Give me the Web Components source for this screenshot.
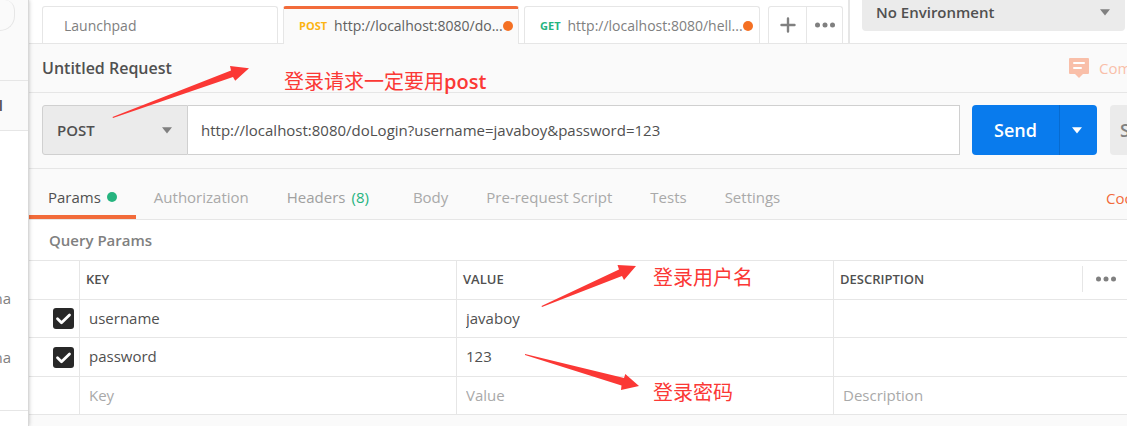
<!DOCTYPE html>
<html lang="en">
<head>
<meta charset="utf-8">
<title>Untitled Request</title>
<style>
  body {
    margin: 0;
    min-height: 100vh;
    background: #fafafa;
    color: #505050;
    font: 15px/20px "Open Sans", "Noto Sans CJK SC", sans-serif;
    overflow: hidden;
    --line: #e6e6e6;
    --muted: #a9a9a9;
    --grey: #808080;
    --accent: #f26b3a;
    --green: #26b47f;
  }
</style>
</head>
<body>
<api-client></api-client>
<script>
const define = (name, html, setup) => {
  const template = document.createElement('template');
  template.innerHTML = html;
  customElements.define(name, class extends HTMLElement {
    constructor() {
      super();
      this.attachShadow({ mode: 'open' }).append(template.content.cloneNode(true));
    }
    connectedCallback() { if (setup) setup(this.shadowRoot, this); }
  });
};

define('caret-icon', `
  <style>:host { display: block; width: 10px; height: 7px; color: var(--grey); pointer-events: none; } svg { display: block; }</style>
  <svg width="10" height="7" viewBox="0 0 10 7" aria-hidden="true"><path d="M0 0.2h10L5 6.6z" fill="currentColor"/></svg>`);

define('dots-icon', `
  <style>:host { display: block; width: 20px; height: 6px; color: var(--grey); } svg { display: block; }</style>
  <svg width="20" height="6" viewBox="0 0 20 6" fill="currentColor" aria-hidden="true"><circle cx="2.5" cy="3" r="2.5"/><circle cx="10" cy="3" r="2.5"/><circle cx="17.5" cy="3" r="2.5"/></svg>`);

define('side-bar', `
  <style>
    :host { display: flex; flex-direction: column; box-sizing: border-box; border-right: 1px solid #d8d8d8; background: #fff; box-shadow: 0 0 4px rgba(0,0,0,.25); z-index: 1; overflow: clip; overflow-clip-margin: 6px; }
    .search, .tab { flex: none; box-sizing: border-box; background: #fafafa; border-bottom: 1px solid var(--line); }
    .search { height: 81px; }
    .pill { box-sizing: border-box; width: 15px; height: 31px; border: solid var(--line); border-width: 0 1px 1px 0; border-radius: 0 12px 18px 0; }
    .tab { height: 50px; padding-bottom: 2px; display: flex; align-items: center; font-weight: 600; }
    .list { flex: none; box-sizing: border-box; height: 280px; padding-top: 157px; border-bottom: 1px solid var(--line); color: var(--grey); }
    .end { display: flex; justify-content: flex-end; width: 11px; margin-bottom: 39px; }
    .tab .end { width: 3px; margin: 0; }
  </style>
  <div class="search"><div class="pill"></div></div>
  <div class="tab"><span class="end">l</span></div>
  <div class="list"><span class="end">na</span><span class="end">na</span></div>`);

define('request-tab', `
  <style>
    :host { display: block; flex: none; width: 236px; height: 37px; }
    button { display: flex; align-items: center; box-sizing: border-box; width: 100%; height: 100%; padding: 2px 7px 0 15px; border: 1px solid var(--line); border-bottom: 0; border-radius: 3px 3px 0 0; background: #fff; color: var(--grey); font: inherit; font-size: 14px; white-space: nowrap; }
    .method { font-size: 11px; font-weight: 700; margin-right: 7px; color: var(--green); }
    .dot { display: none; flex: none; width: 10px; height: 10px; border-radius: 5px; margin-left: auto; background: #f47023; }
    :host([dirty]) .dot { display: block; }
    :host(:not([method])) .method { display: none; }
    :host(:not([method])) button { padding-left: 21px; }
    :host([active]) { height: 38px; margin-bottom: -1px; }
    :host([active]) button { background: #fafafa; color: #606060; border-top: 3px solid var(--accent); padding: 0 7px 1px 15px; }
    :host([active]) .method { color: #fcb414; }
  </style>
  <button type="button" role="tab"><span class="method"></span><slot></slot><span class="dot"></span></button>`,
  (root, host) => { root.querySelector('.method').textContent = host.getAttribute('method') || ''; });

define('tab-bar', `
  <style>
    :host { display: flex; box-sizing: border-box; height: 44px; padding-left: 13px; background: #fff; border-bottom: 1px solid var(--line); }
    .tabs { display: flex; align-items: flex-start; gap: 5px; padding-top: 6px; }
    .actions { display: flex; box-sizing: border-box; width: 75px; height: 37px; margin: 0 5px 0 3px; border: 1px solid var(--line); border-bottom: 0; border-radius: 3px 3px 0 0; }
    .actions button { flex: 1; display: grid; place-items: center; padding: 0; border: 0; background: none; }
    .actions button + button { flex: none; width: 36px; border-left: 1px solid var(--line); }
    .env { flex: 1; display: grid; grid-template-columns: 1fr auto; align-items: start; padding: 0 86px 0 12px; border-left: 2px solid var(--line); }
    select { grid-area: 1 / 1 / 2 / 3; appearance: none; box-sizing: border-box; width: 100%; height: 31px; margin: 0; padding: 0 14px 7px; border: 0; border-radius: 0 0 4px 4px; background: #ebebeb; color: #505050; font: inherit; font-weight: 600; }
    caret-icon { grid-area: 1 / 2; margin: 9px 15px 0 0; }
  </style>
  <div class="tabs" role="tablist">
    <request-tab>Launchpad</request-tab>
    <request-tab method="POST" dirty active>http://localhost:8080/do...</request-tab>
    <request-tab method="GET" dirty>http://localhost:8080/hell...</request-tab>
    <div class="actions">
      <button type="button" aria-label="New tab"><svg width="16" height="16" viewBox="0 0 16 16"><path d="M8 1.5v13M1.5 8h13" stroke="#808080" stroke-width="2.4" stroke-linecap="round"/></svg></button>
      <button type="button" aria-label="Tab options"><dots-icon></dots-icon></button>
    </div>
  </div>
  <div class="env"><select aria-label="Environment"><option>No Environment</option></select><caret-icon></caret-icon></div>`);

define('request-title', `
  <style>
    :host { display: flex; align-items: center; justify-content: space-between; box-sizing: border-box; height: 49px; padding-left: 13px; border-bottom: 1px solid var(--line); }
    h1 { margin: 0; font-size: 16px; line-height: 20px; font-weight: 600; }
    button { display: flex; align-items: center; gap: 10px; width: 142px; padding: 0; border: 0; background: none; color: #f9bfa9; font: inherit; white-space: nowrap; }
    svg { flex: none; }
  </style>
  <h1>Untitled Request</h1>
  <button type="button"><svg width="20" height="20" viewBox="0 0 20 20" aria-hidden="true"><path d="M1 0h18a1 1 0 0 1 1 1v14a1 1 0 0 1-1 1h-5l-4 4-4-4H1a1 1 0 0 1-1-1V1a1 1 0 0 1 1-1z" fill="#f9bfa9"/><path d="M5 5h10M5 10h7" stroke="#fff" stroke-width="2" stroke-linecap="round"/></svg>Comments</button>`);

define('url-bar', `
  <style>
    :host { display: flex; box-sizing: border-box; height: 76px; padding: 12px 24px 13px 13px; border-bottom: 1px solid var(--line); }
    .method { display: grid; grid-template-columns: 1fr auto; align-items: center; width: 146px; height: 50px; }
    select, input { box-sizing: border-box; height: 50px; margin: 0; border: 1px solid #d0d0d0; color: #505050; font: inherit; }
    select { grid-area: 1 / 1 / 2 / 3; appearance: none; width: 100%; padding: 0 14px; border-radius: 3px 0 0 3px; background: #ebebeb; font-weight: 600; }
    .method caret-icon { grid-area: 1 / 2; margin-right: 16px; }
    input { flex: 1; min-width: 0; padding: 0 13px; border-left: 0; background: #fff; outline: 0; }
    button { height: 50px; padding: 0; border: 0; font: inherit; font-size: 18px; font-weight: 600; color: #fff; background: #097bed; }
    .send { width: 87px; margin-left: 12px; border-radius: 4px 0 0 4px; }
    .more { display: grid; place-items: center; width: 38px; padding-right: 3px; border-left: 1px solid #076bd0; border-radius: 0 4px 4px 0; }
    .more caret-icon { color: #fff; }
    .save { width: 77px; margin-left: 13px; padding-left: 10px; border-radius: 4px; background: #ebebeb; color: var(--grey); text-align: left; }
  </style>
  <div class="method"><select aria-label="Method"><option>POST</option></select><caret-icon></caret-icon></div>
  <input type="text" aria-label="Request URL" value="http://localhost:8080/doLogin?username=javaboy&amp;password=123">
  <button class="send" type="button">Send</button>
  <button class="more" type="button" aria-label="Send options"><caret-icon></caret-icon></button>
  <button class="save" type="button">Save</button>`);

define('section-tabs', `
  <style>
    :host { display: flex; justify-content: space-between; box-sizing: border-box; height: 51px; border-bottom: 1px solid var(--line); }
    nav { display: flex; }
    button { display: flex; align-items: center; padding: 6px 19px 0; border: 0; background: none; color: var(--muted); font: inherit; white-space: nowrap; }
    .on { color: #505050; padding-top: 10px; border-bottom: 4px solid var(--accent); margin-right: -1px; }
    .on i { width: 10px; height: 10px; margin-left: 6px; border-radius: 5px; background: var(--green); }
    .headers { color: #a0a0a0; padding-right: 25px; }
    .headers span { color: var(--green); margin-left: 6px; }
    a { width: 105px; padding-top: 19px; color: var(--accent); text-decoration: none; }
  </style>
  <nav role="tablist">
    <button role="tab" class="on">Params<i></i></button>
    <button role="tab">Authorization</button>
    <button role="tab" class="headers">Headers<span>(8)</span></button>
    <button role="tab">Body</button>
    <button role="tab">Pre-request Script</button>
    <button role="tab">Tests</button>
    <button role="tab">Settings</button>
  </nav>
  <a href="#cookies">Cookies</a>`);

define('tick-box', `
  <style>
    :host { display: block; margin-left: 24px; width: 21px; height: 21px; }
    label { display: grid; }
    input, svg { grid-area: 1 / 1; margin: 0; }
    input { appearance: none; width: 21px; height: 21px; border-radius: 3px; background: #282828; }
    svg { pointer-events: none; }
  </style>
  <label><input type="checkbox" checked aria-label="Include parameter"><svg width="21" height="21" viewBox="0 0 21 21" aria-hidden="true"><path d="M4.5 10.8l4 4L16.5 7" fill="none" stroke="#fff" stroke-width="2.8" stroke-linecap="round" stroke-linejoin="round"/></svg></label>`);

define('params-table', `
  <style>
    :host { display: block; background: #fff; }
    h2 { margin: 0; padding: 10px 20px; font-size: 15px; line-height: 20px; font-weight: 600; color: var(--grey); border-bottom: 1px solid var(--line); }
    table { width: 100%; table-layout: fixed; border-collapse: separate; border-spacing: 0; }
    .pick { width: 51px; }
    th, td { box-sizing: border-box; padding: 0; border: solid var(--line); border-width: 0 1px 1px 0; }
    tr { height: 38px; }
    thead tr, tbody tr:nth-child(even) { height: 39px; }
    th { padding: 0 0 2px 6px; font-size: 13px; font-weight: 600; text-align: left; }
    .desc { display: flex; align-items: center; justify-content: space-between; }
    .more { display: flex; align-items: center; box-sizing: border-box; width: 128px; height: 26px; padding: 0 0 0 13px; border: 0; border-left: 1px solid var(--line); background: none; }
    input { display: block; box-sizing: border-box; width: 100%; height: 36px; padding: 0 9px 2px; border: 0; background: none; color: #505050; font: inherit; outline: 0; }
    input::placeholder { color: var(--muted); opacity: 1; }
  </style>
  <h2>Query Params</h2>
  <table>
    <thead><tr><th class="pick"></th><th>KEY</th><th>VALUE</th><th><div class="desc">DESCRIPTION<button class="more" type="button" aria-label="Column options"><dots-icon></dots-icon></button></div></th></tr></thead>
    <tbody>
      <tr><td><tick-box></tick-box></td><td><input aria-label="Key" value="username"></td><td><input aria-label="Value" value="javaboy"></td><td><input aria-label="Description"></td></tr>
      <tr><td><tick-box></tick-box></td><td><input aria-label="Key" value="password"></td><td><input aria-label="Value" value="123"></td><td><input aria-label="Description"></td></tr>
      <tr><td></td><td><input aria-label="Key" placeholder="Key"></td><td><input aria-label="Value" placeholder="Value"></td><td><input aria-label="Description" placeholder="Description"></td></tr>
    </tbody>
  </table>`);

/* Red notes drawn over the request editor */
define('note-layer', `
  <style>
    :host { position: absolute; left: 0; top: 0; z-index: 2; color: #fb3835; pointer-events: none; font-size: 20px; line-height: 24px; white-space: nowrap; }
    svg { display: block; }
    span { position: absolute; }
    b { font-weight: 600; }
    .method { left: 284px; top: 70px; }
    .user { left: 653px; top: 266px; }
    .pass { left: 653px; top: 381px; }
  </style>
  <svg width="660" height="400" viewBox="0 0 660 400" fill="currentColor" aria-hidden="true">
    <path d="M112.5 117L231 70.5 230 66 249 68.3 235.2 80.8 233 77 113 118z"/>
    <path d="M541.5 306L619 269.5 617.5 265 636 266 624 280 622 276 542 307z"/>
    <path d="M525 354L624 378 625.3 374 639 386 621 390 621.5 385.5 525 355z"/>
  </svg>
  <span class="method">登录请求一定要用<b>post</b></span>
  <span class="user">登录用户名</span>
  <span class="pass">登录密码</span>`);

define('api-client', `
  <style>
    :host { display: grid; grid-template-columns: 29px minmax(0, 1fr); position: relative; min-height: 100vh; overflow: hidden; }
    main { width: calc(100% + 84px); }
  </style>
  <side-bar></side-bar>
  <main>
    <tab-bar></tab-bar>
    <request-title></request-title>
    <url-bar></url-bar>
    <section-tabs></section-tabs>
    <params-table></params-table>
  </main>
  <note-layer></note-layer>`);
</script>
</body>
</html>
